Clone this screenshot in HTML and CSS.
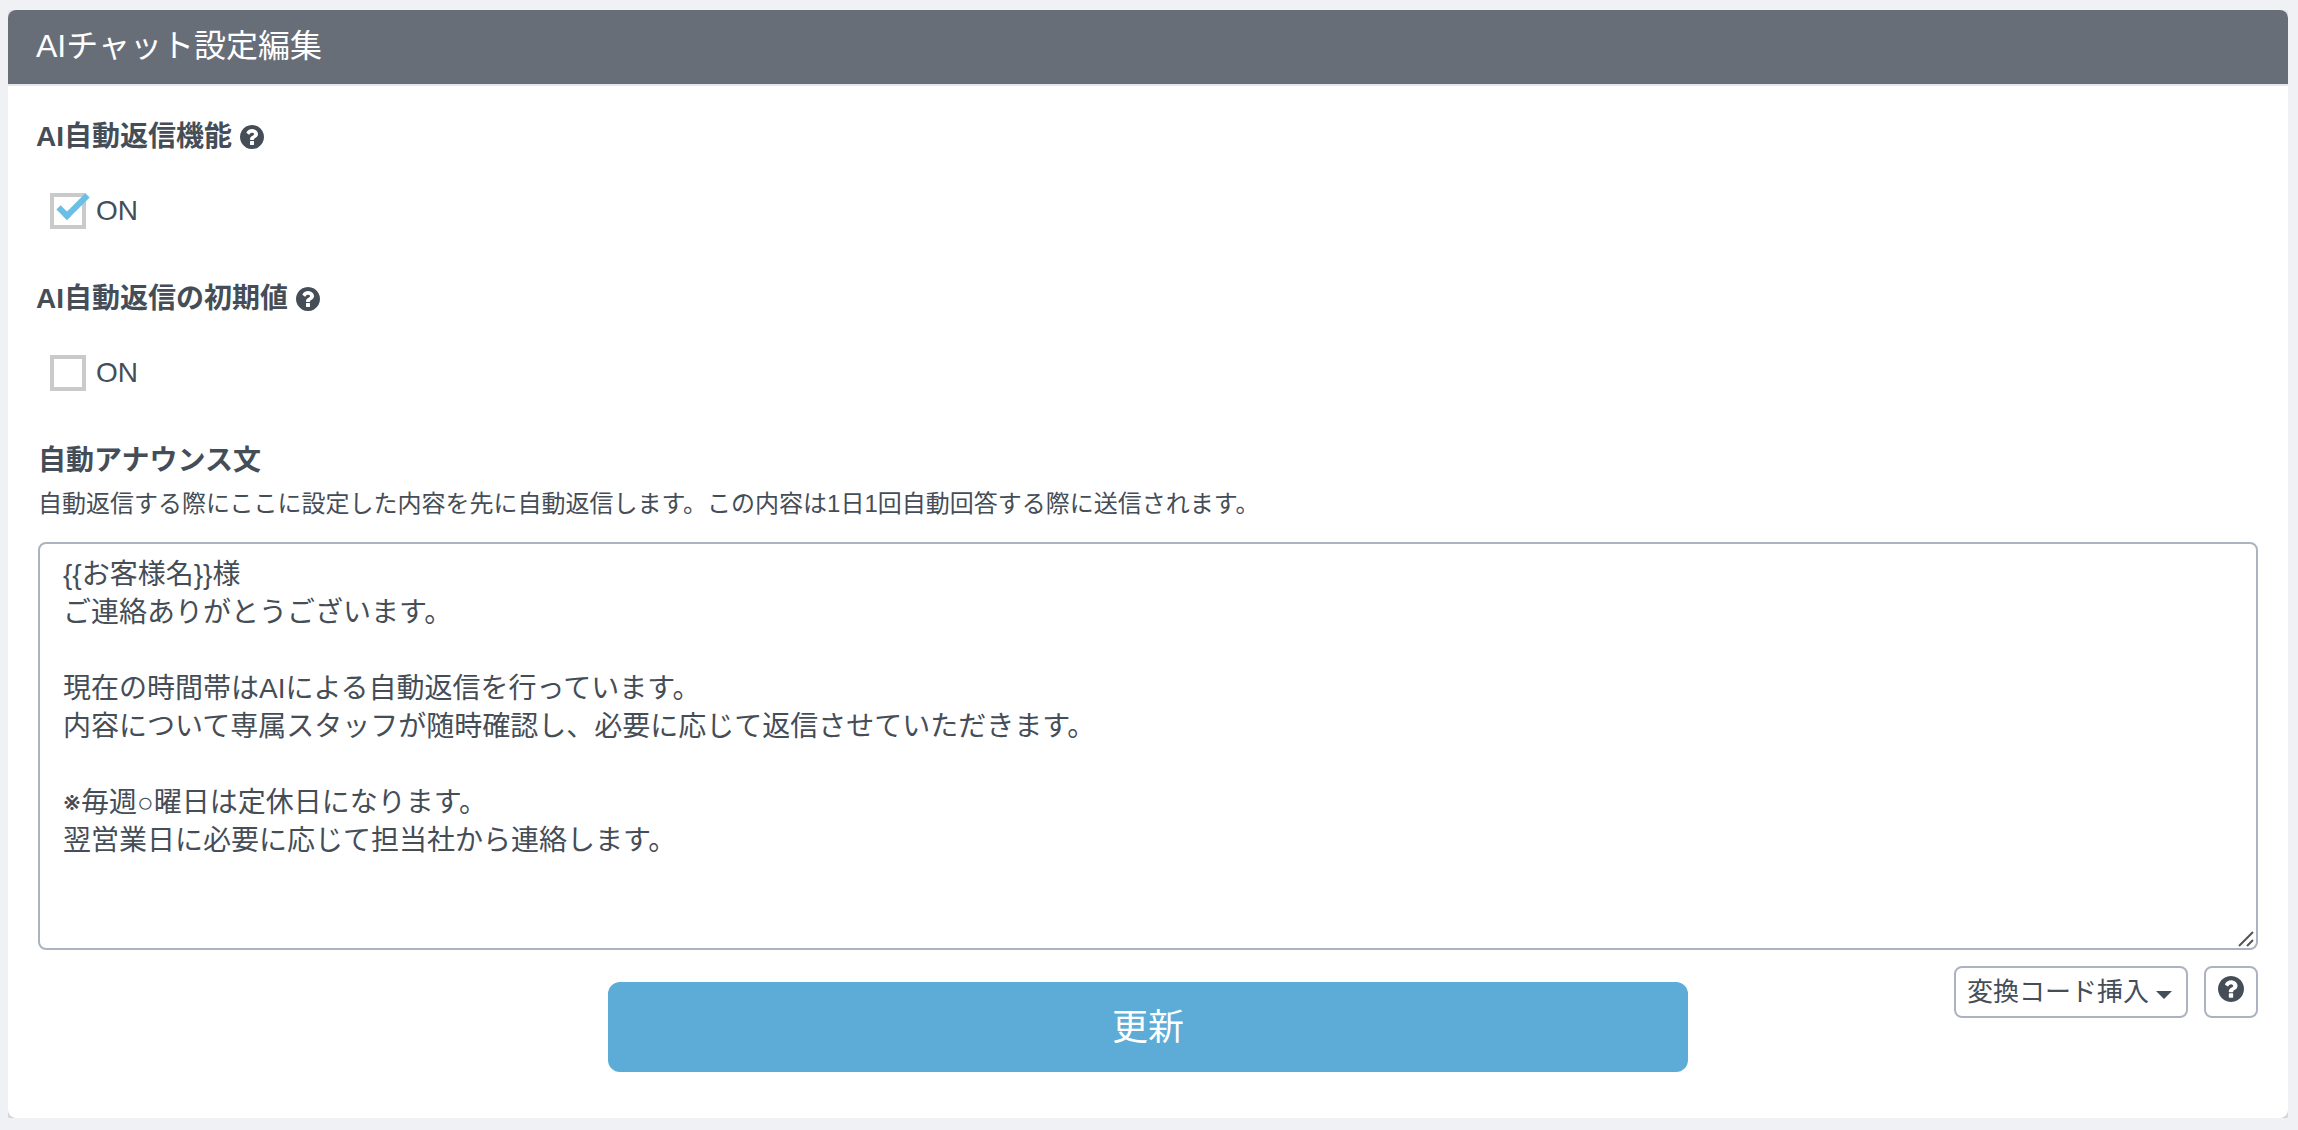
FILE: index.html
```
<!DOCTYPE html>
<html lang="ja">
<head>
  <meta charset="UTF-8" />
  <meta name="viewport" content="width=device-width, initial-scale=1.0"/>
  <title>AIチャット設定編集</title>
  <link rel="stylesheet" href="styles.css">
</head>
<body>
  <svg class="sprite" aria-hidden="true">
    <symbol id="icon-help" viewBox="128 128 1536 1536">
      <path d="M1024 1376v-192q0-14-9-23t-23-9h-192q-14 0-23 9t-9 23v192q0 14 9 23t23 9h192q14 0 23-9t9-23zm256-672q0-88-55.5-163t-138.5-116-170-41q-243 0-371 213-15 24 8 42l132 100q7 6 19 6 16 0 25-12 53-68 86-92 34-24 86-24 48 0 85.5 26t37.5 59q0 38-20 61t-68 45q-63 28-115.5 86.5t-52.5 125.5v36q0 14 9 23t23 9h192q14 0 23-9t9-23q0-19 21.5-49.5t54.5-49.5q32-18 49-28.5t46-35 44.5-48 28-60.5 12.5-81zm384 192q0 209-103 385.5t-279.5 279.5-385.5 103-385.5-103-279.5-279.5-103-385.5 103-385.5 279.5-279.5 385.5-103 385.5 103 279.5 279.5 103 385.5z"/>
    </symbol>
  </svg>

  <main class="card">
    <header class="card-header">
      <h1>AIチャット設定編集</h1>
    </header>

    <form class="card-body">
      <section class="field">
        <h2 class="field-title">AI自動返信機能 <svg class="help-icon"><use href="#icon-help"/></svg></h2>
        <label class="check-row">
          <input type="checkbox" class="checkbox" name="ai_reply" checked>
          <span>ON</span>
        </label>
      </section>

      <section class="field">
        <h2 class="field-title">AI自動返信の初期値 <svg class="help-icon"><use href="#icon-help"/></svg></h2>
        <label class="check-row">
          <input type="checkbox" class="checkbox" name="ai_reply_default">
          <span>ON</span>
        </label>
      </section>

      <section class="announce">
        <label class="field-title" for="announce-text">自動アナウンス文</label>
        <p class="hint">自動返信する際にここに設定した内容を先に自動返信します。この内容は1日1回自動回答する際に送信されます。</p>
        <div class="textarea-wrap">
          <textarea id="announce-text" name="announce" rows="10">{{お客様名}}様
ご連絡ありがとうございます。

現在の時間帯はAIによる自動返信を行っています。
内容について専属スタッフが随時確認し、必要に応じて返信させていただきます。

※毎週○曜日は定休日になります。
翌営業日に必要に応じて担当社から連絡します。</textarea>
          <svg class="grip" viewBox="0 0 16 16"><path d="M1 15L15 1M9 15L15 9"/></svg>
        </div>
      </section>

      <div class="actions">
        <button type="submit" class="btn-primary">更新</button>
        <div class="tools">
          <button type="button" class="btn-outline">変換コード挿入<span class="caret"></span></button>
          <button type="button" class="btn-outline btn-help" aria-label="ヘルプ"><svg class="help-icon"><use href="#icon-help"/></svg></button>
        </div>
      </div>
    </form>
  </main>
</body>
</html>
```
FILE: styles.css
```
*, *::after {
  box-sizing: border-box;
}

body {
  font-family: "Liberation Sans", "Inter", "Noto Sans CJK JP", sans-serif;
  font-size: 28px;
  margin: 10px 10px 12px 8px;
  background-color: #f0f1f5;
  color: #454d57;
}

button, textarea {
  font-family: inherit;
  color: inherit;
}

.sprite {
  display: none;
}

.card {
  background-color: white;
  border-radius: 8px;
  box-shadow: 0 2px 6px rgba(60,50,70,0.35);
}

.card-header {
  background-color: #676e78;
  border-bottom: 2px solid #e6e7e9;
  border-radius: 8px 8px 0 0;
  padding: 12px 28px 14px;
  color: white;
}

.card-header h1 {
  margin: 0;
  font-size: 32px;
  font-weight: normal;
  line-height: 48px;
}

.card-body {
  padding: 31px 30px 46px;
}

.field {
  margin: 0 0 50px -2px;
}

.field-title {
  display: flex;
  align-items: center;
  gap: 8px;
  margin: 0;
  font-size: 28px;
  font-weight: bold;
  line-height: 40px;
}

.help-icon {
  width: 24px;
  height: 24px;
  fill: currentColor;
}

.check-row {
  display: inline-flex;
  align-items: center;
  gap: 10px;
  height: 36px;
  margin: 36px 0 0 14px;
  vertical-align: top;
}

.checkbox {
  appearance: none;
  position: relative;
  width: 36px;
  height: 36px;
  margin: 0;
  border: 4px solid #cacaca;
}

.checkbox:checked::after {
  content: "";
  position: absolute;
  left: 3px;
  top: -1px;
  width: 32px;
  height: 15px;
  border-left: 6px solid #6bbfe5;
  border-bottom: 6px solid #6bbfe5;
  transform: rotate(-45deg);
}

.hint {
  margin: 5px 0 20px;
  font-size: 24px;
  line-height: 36px;
}

.textarea-wrap {
  position: relative;
}

textarea {
  display: block;
  width: 100%;
  height: 408px;
  padding: 12px 23px;
  border: 2px solid #acb3c0;
  border-radius: 8px;
  background-color: white;
  font-size: 28px;
  line-height: 38px;
  resize: none;
}

.grip {
  position: absolute;
  right: 4px;
  bottom: 3px;
  width: 16px;
  height: 16px;
  fill: none;
  stroke: #555;
  stroke-width: 2;
}

.actions {
  display: grid;
  grid-template-columns: 1fr calc(50% - 30px) 1fr;
  align-items: start;
  padding-top: 16px;
}

.btn-primary {
  grid-column: 2;
  height: 90px;
  margin-top: 16px;
  padding: 0 0 6px;
  border: none;
  border-radius: 12px;
  background-color: #5cacd7;
  color: white;
  font-size: 36px;
}

.tools {
  display: flex;
  justify-content: flex-end;
  gap: 16px;
}

.btn-outline {
  display: flex;
  align-items: center;
  gap: 7px;
  height: 52px;
  padding: 0 14px 6px 11px;
  border: 2px solid #acb3c0;
  border-radius: 8px;
  background-color: white;
  font-size: 26px;
}

.caret {
  margin-top: 12px;
  border-top: 8px solid currentColor;
  border-left: 8px solid transparent;
  border-right: 8px solid transparent;
}

.btn-help {
  padding: 0 12px 6px;
}

.btn-help .help-icon {
  width: 26px;
  height: 26px;
}
```
